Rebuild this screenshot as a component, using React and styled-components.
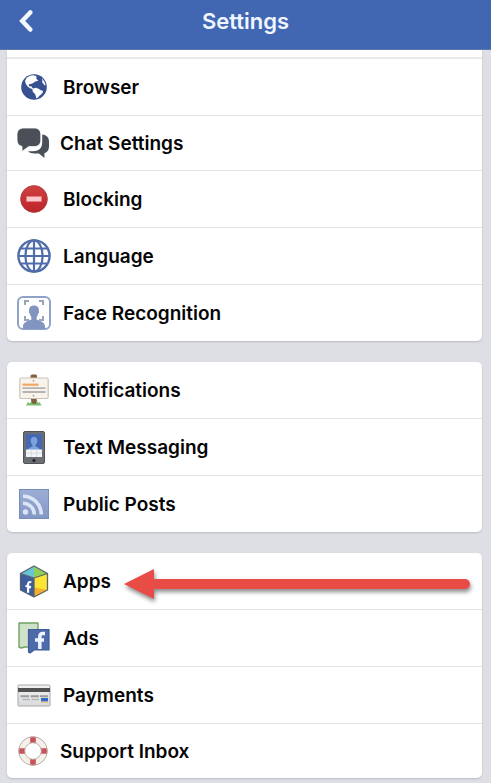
import React from 'react';
import styled, { createGlobalStyle } from 'styled-components';


const groups = [
    {
        continued: true,
        items: [
            { name: 'Browser', icon: GlobeIcon },
            { name: 'Chat Settings', icon: ChatIcon, compact: true },
            { name: 'Blocking', icon: BlockIcon },
            { name: 'Language', icon: LanguageIcon },
            { name: 'Face Recognition', icon: FaceIcon },
        ],
    },
    {
        items: [
            { name: 'Notifications', icon: SignIcon },
            { name: 'Text Messaging', icon: PhoneIcon },
            { name: 'Public Posts', icon: FeedIcon },
        ],
    },
    {
        items: [
            { name: 'Apps', icon: AppsIcon, pointed: true },
            { name: 'Ads', icon: AdsIcon },
            { name: 'Payments', icon: CardIcon },
            { name: 'Support Inbox', icon: SupportIcon, compact: true },
        ],
    },
];

export default function App(){
    return(
        <>
            <GlobalStyle />
            <Page>
                <Header>
                    <BackButton type='button' aria-label='Back'>
                        <svg width='14' height='22' viewBox='0 0 14 22' fill='none' stroke='#f4f9ff' strokeWidth='4.4' strokeLinecap='round' strokeLinejoin='miter'>
                            <path d='M11.3 2.4 3.2 11 11.3 19.6' />
                        </svg>
                    </BackButton>
                    <Title>Settings</Title>
                </Header>
                <Groups>
                    {groups.map((group, index) => (
                        <Group key={index} $continued={group.continued}>
                            {group.items.map(item => <SettingsItem key={item.name} item={item} />)}
                        </Group>
                    ))}
                </Groups>
            </Page>
        </>
    )
}

function SettingsItem({ item }){
    const Icon = item.icon;

    return(
        <Item>
            <ItemLink href='#' $compact={item.compact}>
                <IconSlot><Icon /></IconSlot>
                <Label>{item.name}</Label>
            </ItemLink>
            {item.pointed && <Arrow aria-hidden='true'><ArrowHead /><ArrowShaft /></Arrow>}
        </Item>
    )
}

// icons
function GlobeIcon(){
    return(
        <svg width='26' height='26' viewBox='0 0 26 26'>
            <circle cx='13' cy='13' r='12.8' fill='#37508f' />
            <path fill='#fff' d='M5.6 3.8 9 1.8 12 1.3 15 2 16 3.4 14.6 3.8 16.2 5.4 17.2 7 15.2 7.2 13.8 7.8 11.8 9.2 10 10 8.4 10 7.6 11.2 8.8 12.6 10.4 12.2 11.2 13.8 12.6 14.4 11.8 15 9.4 14.4 6.6 12.4 4.8 9.8 4 7Z' />
            <path fill='#fff' d='M12.2 14.4 15 13.8 17.6 14.8 19.4 16 22 17 21.6 18.8 20 20.6 18.4 21.8 17 23.6 15.4 24.4 14.8 22.2 14 20 12.2 18.2 11.2 16Z' />
            <path fill='#fff' d='M20.6 4.2 23.2 7.2 24.6 10.8 23.6 11.4 22.4 9.8 21.2 8.6 21.4 6.6Z' />
        </svg>
    )
}

function ChatIcon(){
    return(
        <svg width='34' height='30' viewBox='0 0 34 30' fill='#4b4f58'>
            <path d='M25.2 6.4C29.8 6.9 32 9.4 32 13.4v4.8c0 3.6-1.5 5.9-4.6 7V30l-5.5-4.5h-4.4c-3 0-5.1-.7-6.4-2.2h4.6c6.2 0 9.5-3.1 9.5-9Z' />
            <path d='M7 0h10c4.5 0 6.8 2.4 6.8 6.8v5c0 4.3-2.3 6.8-6.8 6.8h-5.2L5 23.4v-5C1.7 17.7 0 15.5 0 11.8v-5C0 2.4 2.5 0 7 0Z' stroke='#fff' strokeWidth='.8' />
        </svg>
    )
}

function BlockIcon(){
    return(
        <svg width='28' height='28' viewBox='0 0 28 28'>
            <defs>
                <linearGradient id='block' x1='0' y1='0' x2='0' y2='1'>
                    <stop offset='0' stopColor='#cf4141' />
                    <stop offset='1' stopColor='#bd2429' />
                </linearGradient>
            </defs>
            <circle cx='14' cy='14' r='13.4' fill='url(#block)' stroke='#a5403d' strokeWidth='.8' />
            <rect x='6.5' y='11.5' width='15' height='5' fill='#fbc9cb' stroke='#e47b7e' strokeWidth='.7' />
        </svg>
    )
}

function LanguageIcon(){
    return(
        <svg width='34' height='34' viewBox='0 0 34 34' fill='none' stroke='#4f6cab' strokeWidth='2.2'>
            <circle cx='17' cy='17' r='15.6' strokeWidth='2.4' />
            <ellipse cx='17' cy='17' rx='8.6' ry='15.6' />
            <path d='M17 1.5v31M1.5 17h31M4 9.5h26M4 24.5h26' />
        </svg>
    )
}

function FaceIcon(){
    return(
        <svg width='34' height='34' viewBox='0 0 34 34'>
            <rect x='1' y='1' width='32' height='32' rx='5' fill='#fff' stroke='#8fa2c8' strokeWidth='2' />
            <path d='M8 9V5h4M22 5h4v4M8 20v4h4M22 24h4v-4' fill='none' stroke='#97a5bb' strokeWidth='2' />
            <path fill='#8295c0' d='M17 9.5c3.5 0 5.2 2.2 4.9 5.5.5 1.3 0 2.4-.8 2.8-.3 1.5-.8 2.6-1.5 3.4v2.2c4.7 1.8 8.4 3.2 8.4 6.8V33H6v-2.800c0-3.600 3.700-5 8.400-6.800v-2.200c-.7-.8-1.200-1.900-1.500-3.400-.8-.4-1.300-1.500-.8-2.800C11.800 11.700 13.500 9.500 17 9.500Z' />
        </svg>
    )
}

function SignIcon(){
    return(
        <svg width='30' height='33' viewBox='0 0 30 33'>
            <path d='M7 31.5 9 28l2 1.500L13 26h5l1 3 2-1 .5 2 1.500 1.500Z' fill='#7dbd70' />
            <path d='M11.5 5V1.500L13 .5h4l1 1V5ZM11.500 24H18l-1 6-4-.5Z' fill='#82603e' />
            <rect x='.8' y='4' width='28.4' height='20.5' rx='1.5' fill='#f8f4ec' stroke='#c9c2b8' strokeWidth='1.2' />
            <circle cx='14.5' cy='6.8' r='1' fill='#b4aea5' />
            <circle cx='14.5' cy='21.7' r='1' fill='#b4aea5' />
            <path d='M3.5 10.7h16' stroke='#f2a766' strokeWidth='2.2' />
            <path d='M3.5 14.2h23M3.500 18h23' stroke='#b5b3b5' strokeWidth='1.8' />
        </svg>
    )
}

function PhoneIcon(){
    return(
        <svg width='22' height='33' viewBox='0 0 22 33'>
            <rect x='.5' y='.5' width='21' height='32' rx='1.5' fill='#6b6e72' stroke='#505357' />
            <rect x='3' y='3' width='16' height='23' fill='#4568b0' />
            <path d='M11 6c2.4 0 3.5 1.7 3.3 4-.2 2-1 3.3-1.8 4v1.5c3 .9 4.500 2 4.500 4.500H5c0-2.500 1.500-3.600 4.500-4.500V14c-.8-.7-1.600-2-1.800-4C7.500 7.700 8.600 6 11 6Z' fill='#7da2df' />
            <rect x='3' y='18.5' width='16' height='7.5' fill='#f2f4f6' />
            <path d='M8.3 18.5V26M13.700 18.500V26M3 22.200h16' stroke='#cfd4db' strokeWidth='.7' />
            <circle cx='11' cy='29.4' r='1.6' fill='#25272a' />
        </svg>
    )
}

function FeedIcon(){
    return(
        <svg width='30' height='30' viewBox='0 0 30 30'>
            <defs>
                <linearGradient id='feed' x1='0' y1='0' x2='0' y2='1'>
                    <stop offset='0' stopColor='#9caed4' />
                    <stop offset='1' stopColor='#8397c5' />
                </linearGradient>
            </defs>
            <rect x='.5' y='.5' width='29' height='29' fill='url(#feed)' stroke='#768cb9' />
            <circle cx='6.5' cy='23' r='2.7' fill='#dce5f6' />
            <path d='M4 14.2A11.3 11.3 0 0 1 15.300 25.500M4 7.200A18.300 18.300 0 0 1 22.300 25.500' fill='none' stroke='#dce5f6' strokeWidth='3.6' />
        </svg>
    )
}

function AppsIcon(){
    return(
        <svg width='30' height='33' viewBox='0 0 30 33' strokeLinejoin='round'>
            <path d='M15 1 1.500 8.500 15 13Z' fill='#68c3d4' />
            <path d='M15 1 28.500 8.500 15 13Z' fill='#91cf57' />
            <path d='M1.500 8.500 15 13v19L1.500 25Z' fill='#3d5d9e' />
            <path d='M28.500 8.500 15 13v19l13.500-7Z' fill='#fde535' />
            <path d='M15 22.500 28.500 25 15 32Z' fill='#f6ad2b' />
            <path d='M15 1 28.500 8.500V25L15 32 1.500 25V8.500ZM1.500 8.500 15 13l13.500-4.500M15 13v19' fill='none' stroke='#59646c' strokeWidth='1.3' />
            <path d='M12.300 17.300c-2.400-.8-3.200.2-3.200 2v8.500M6.500 20.700l5.500 1.700' fill='none' stroke='#fff' strokeWidth='2.2' />
        </svg>
    )
}

function AdsIcon(){
    return(
        <svg width='32' height='32' viewBox='0 0 32 32' strokeLinejoin='round'>
            <path d='M1 1h19v24H7l-4 1-2-1Z' fill='#cfe2c9' stroke='#70a264' strokeWidth='1.4' />
            <path d='M10.500 7.500h20.500V28H16l-4 3-1.500-1Z' fill='#4d6baa' stroke='#3f5c9a' strokeWidth='1.2' />
            <path d='M27 11.500h-2c-2.200 0-3.200 1-3.200 3.200V27M17 18h9' fill='none' stroke='#eef4ff' strokeWidth='3.5' />
        </svg>
    )
}

function CardIcon(){
    return(
        <svg width='34' height='23' viewBox='0 0 34 23'>
            <defs>
                <linearGradient id='card' x1='0' y1='0' x2='0' y2='1'>
                    <stop offset='0' stopColor='#f2f2f2' />
                    <stop offset='1' stopColor='#d8dadd' />
                </linearGradient>
            </defs>
            <rect x='1' y='1' width='32' height='21' rx='1' fill='url(#card)' stroke='#a6a8aa' />
            <rect x='1' y='4' width='32' height='4' fill='#515151' />
            <path d='M3.5 12.3H12M13.500 12.300H22M23 12.300h8' stroke='#9b9b9b' strokeWidth='2' />
            <path d='M5.5 15.5H13M14.500 15.500H22' stroke='#b7b7b7' strokeWidth='1.3' />
            <rect x='24' y='14' width='7' height='3.5' fill='#3468c7' />
            <path d='M24 18.3h7' stroke='#e7c177' strokeWidth='1.2' />
        </svg>
    )
}

function SupportIcon(){
    return(
        <svg width='32' height='30' viewBox='0 0 32 30' fill='none'>
            <circle cx='15' cy='15' r='11.3' stroke='#f5f1ea' strokeWidth='6' />
            <path d='M15 .8v6.200M15 23v6.200M.8 15h6.200M23 15h6.200' stroke='#c9515b' strokeWidth='5.6' />
            <circle cx='15' cy='15' r='14.3' stroke='#b9ada6' />
            <circle cx='15' cy='15' r='8.3' stroke='#bdb3ac' />
        </svg>
    )
}

const GlobalStyle = createGlobalStyle`
    * {
        box-sizing: border-box;
    }
    body {
        margin: 0;
        background: #dddfe4;
        font-family: Inter, "Liberation Sans", sans-serif;
    }
`;

//containers
const Page = styled.div`
    min-height: 100vh;
    padding-bottom: 5px;
`;

const Header = styled.header`
    display: grid;
    grid-template-columns: 52px 1fr 52px;
    align-items: center;
    height: 50px;
    padding-bottom: 8px;
    background: #4267b2;
    border-bottom: 1px solid #5d78ad;
`;

const BackButton = styled.button`
    display: flex;
    justify-content: center;
    padding: 0;
    border: none;
    background: none;
    cursor: pointer;
`;

const Title = styled.h1`
    margin: 0;
    color: #f0f6ff;
    font-size: 22px;
    line-height: 28px;
    font-weight: 600;
    text-align: center;
`;

const Groups = styled.main`
    display: flex;
    flex-direction: column;
    gap: 21px;
    padding: 0 9px 0 7px;
`;

const Group = styled.ul`
    margin: 0;
    padding: ${props => props.$continued ? '7px 0 0' : '0'};
    list-style: none;
    background: #fff;
    border-radius: ${props => props.$continued ? '0 0 5px 5px' : '5px'};
    box-shadow: 0 1px 2px #b9bcc2;
    clip-path: ${props => props.$continued ? 'inset(0 -3px -4px -3px)' : 'none'};

    li:first-child {
        border-top: ${props => props.$continued ? '2px solid #e9e9eb' : 'none'};
    }
`;

// row styles
const Item = styled.li`
    position: relative;

    & + & {
        border-top: 1px solid #e3e3e6;
    }
`;

const ItemLink = styled.a`
    display: flex;
    align-items: center;
    gap: ${props => props.$compact ? '9px' : '12px'};
    min-height: ${props => props.$compact ? '54px' : '56px'};
    padding: 0 10px;
    color: #050506;
    text-decoration: none;
`;

const IconSlot = styled.span`
    display: flex;
    justify-content: center;
    width: 34px;
`;

const Label = styled.span`
    padding-top: 2px;
    font-size: 19px;
    line-height: 24px;
    font-weight: 600;
`;

//arrow that points at a row
const Arrow = styled.span`
    position: absolute;
    top: 16px;
    left: 117px;
    right: 12px;
    display: flex;
    align-items: center;
    filter: drop-shadow(1px 3px 2px rgba(0, 0, 0, 0.45));
    pointer-events: none;
`;

const ArrowHead = styled.span`
    border: 15px solid transparent;
    border-left: none;
    border-right: 30px solid #e94b46;
`;

const ArrowShaft = styled.span`
    flex: 1;
    height: 10px;
    border-radius: 0 5px 5px 0;
    background: #e94b46;
`;
